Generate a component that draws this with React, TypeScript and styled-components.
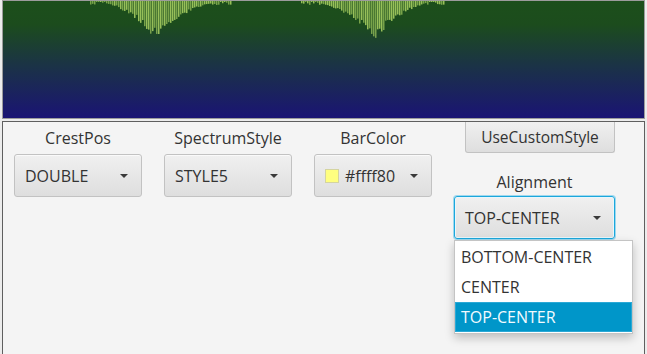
import React from "react";
import styled, { createGlobalStyle } from "styled-components";

const Global = createGlobalStyle`
  html, body { margin: 0; padding: 0; background: #ececec; }
  body { font-family: "Open Sans", "Noto Sans", sans-serif; }
  * { box-sizing: border-box; }
`;

const Frame = styled.div`
  width: 647px;
  height: 354px;
  padding: 0 2px 0 2px;
  display: flex;
  flex-direction: column;
  overflow: hidden;
`;

const CanvasBox = styled.div`
  height: 119px;
  border: 1px solid #9c9c9c;
  margin-bottom: 2px;
  background: #1b4d1b;
  svg { display: block; }
`;

const Panel = styled.div`
  flex: 1;
  background: #f4f4f4;
  border: 1px solid #5f5f5f;
  border-bottom: none;
  display: flex;
  gap: 22px;
  padding: 0 0 0 11px;
  align-items: flex-start;
`;

const Column = styled.div<{ $w: number }>`
  width: ${(p) => p.$w}px;
  display: flex;
  flex-direction: column;
  align-items: stretch;
  padding-top: 6px;
`;

const RightColumn = styled.div`
  width: 161px;
  display: flex;
  flex-direction: column;
  align-items: flex-end;
  position: relative;
`;

const Label = styled.div`
  height: 20px;
  line-height: 20px;
  font-size: 16px;
  color: #333;
  text-align: center;
  margin-bottom: 6px;
  align-self: stretch;
  white-space: nowrap;
`;

const AlignLabel = styled(Label)`
  margin-top: 19px;
  margin-bottom: 4px;
`;

const Combo = styled.div<{ $focused?: boolean }>`
  height: 43px;
  width: 100%;
  border-radius: 3px;
  border: 1px solid ${(p) => (p.$focused ? "#1ba7dc" : "#c2c2c2")};
  box-shadow: ${(p) =>
    p.$focused
      ? "0 0 0 1px #9fd8ee, inset 0 0 0 1px #e9f6fb"
      : "inset 0 1px 0 #fafafa"};
  background: linear-gradient(#f0f0f0, #dedede);
  display: flex;
  align-items: center;
  padding: 0 13px 0 10px;
  gap: 6px;
  font-size: 16px;
  color: #333;
`;

const ComboText = styled.span`
  flex: 1;
  white-space: nowrap;
`;

const Arrow = styled.span`
  width: 0;
  height: 0;
  border-left: 4px solid transparent;
  border-right: 4px solid transparent;
  border-top: 4px solid #3a3a3a;
`;

const Swatch = styled.span`
  width: 14px;
  height: 14px;
  background: #ffff80;
  border: 1px solid #d4d4a0;
  flex: none;
`;

const Button = styled.div`
  width: 150px;
  height: 31px;
  border-radius: 0 0 3px 3px;
  border: 1px solid #c2c2c2;
  border-top: none;
  background: linear-gradient(#f0f0f0, #dedede);
  font-size: 15.5px;
  color: #333;
  display: flex;
  align-items: center;
  justify-content: center;
`;

const Popup = styled.div`
  position: absolute;
  top: 118px;
  left: 0;
  width: 179px;
  background: #fff;
  border: 1px solid #c4c4c4;
  box-shadow: 0 4px 9px rgba(0, 0, 0, 0.22);
  padding: 1px 0;
  display: flex;
  flex-direction: column;
`;

const Item = styled.div<{ $sel?: boolean }>`
  height: 30px;
  line-height: 30px;
  padding-left: 6px;
  font-size: 16px;
  color: ${(p) => (p.$sel ? "#f2fbff" : "#333")};
  background: ${(p) => (p.$sel ? "#0096c9" : "transparent")};
  box-shadow: ${(p) => (p.$sel ? "inset 0 0 0 1px #2aa9d6" : "none")};
  white-space: nowrap;
`;

function rnd(i: number) {
  const s = Math.sin(i * 12.9898) * 43758.5453;
  return s - Math.floor(s);
}

function Spectrum() {
  const bars: React.ReactNode[] = [];
  const peaks = [
    { c: 151, l: 64, r: 76, d: 38 },
    { c: 372, l: 74, r: 68, d: 38 },
  ];
  for (const p of peaks) {
    for (let x = p.c - p.l; x <= p.c + p.r; x += 2) {
      const dist = x < p.c ? (p.c - x) / p.l : (x - p.c) / p.r;
      const t = 1 - dist;
      let h = p.d * Math.pow(t, 2) * (0.7 + 0.3 * rnd(x));
      if (h < 2) h = rnd(x + 5) > 0.4 ? 1.5 + 2.5 * rnd(x + 3) : 1;
      bars.push(
        <rect
          key={x}
          x={x}
          y={0}
          width={1.5}
          height={h}
          fill="#b2d866"
          opacity={rnd(x + 11) > 0.5 ? 0.82 : 0.62}
        />
      );
    }
  }
  return (
    <svg width="641" height="117" viewBox="0 0 641 117">
      <defs>
        <linearGradient id="bg" x1="0" y1="0" x2="0" y2="1">
          <stop offset="0" stopColor="#1c4f1b" />
          <stop offset="0.2" stopColor="#1c4c1d" />
          <stop offset="0.55" stopColor="#1b3346" />
          <stop offset="1" stopColor="#1a1474" />
        </linearGradient>
      </defs>
      <rect x="0" y="0" width="641" height="117" fill="url(#bg)" />
      {bars}
    </svg>
  );
}

export default function App() {
  return (
    <>
      <Global />
      <Frame>
        <CanvasBox>
          <Spectrum />
        </CanvasBox>
        <Panel>
          <Column $w={128}>
            <Label>CrestPos</Label>
            <Combo>
              <ComboText>DOUBLE</ComboText>
              <Arrow />
            </Combo>
          </Column>
          <Column $w={128}>
            <Label>SpectrumStyle</Label>
            <Combo>
              <ComboText>STYLE5</ComboText>
              <Arrow />
            </Combo>
          </Column>
          <Column $w={118}>
            <Label>BarColor</Label>
            <Combo>
              <Swatch />
              <ComboText>#ffff80</ComboText>
              <Arrow />
            </Combo>
          </Column>
          <RightColumn>
            <Button>UseCustomStyle</Button>
            <AlignLabel>Alignment</AlignLabel>
            <Combo $focused>
              <ComboText>TOP-CENTER</ComboText>
              <Arrow />
            </Combo>
            <Popup>
              <Item>BOTTOM-CENTER</Item>
              <Item>CENTER</Item>
              <Item $sel>TOP-CENTER</Item>
            </Popup>
          </RightColumn>
        </Panel>
      </Frame>
    </>
  );
}
